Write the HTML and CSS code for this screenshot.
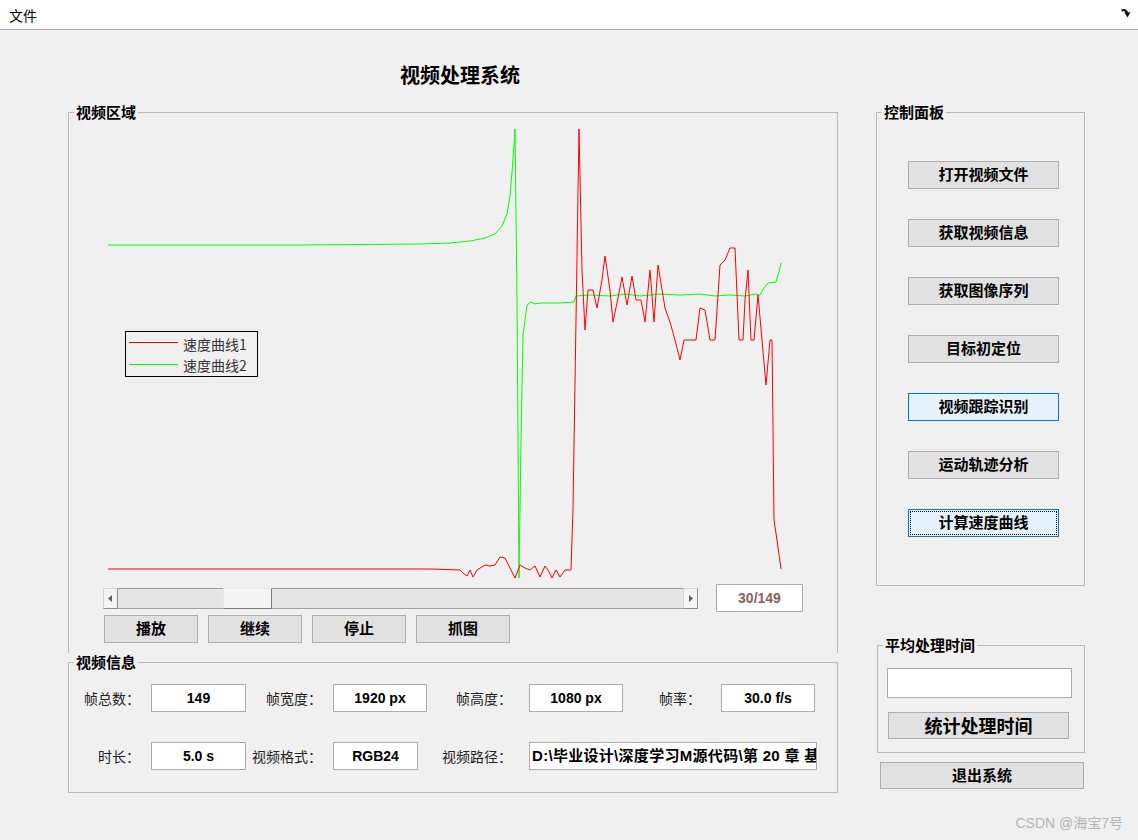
FILE: index.html
```html
<!DOCTYPE html>
<html lang="zh-CN">
<head>
  <meta charset="UTF-8">
  <title>视频处理系统</title>
  <link rel="stylesheet" href="styles.css">
</head>
<body>

  <div class="menubar">
    <span class="menu-item">文件</span>
    <svg class="dock-icon" width="10" height="10" viewBox="0 0 10 10">
      <path d="M0.5 2.5 C4 1.5 5.5 2.5 6 5" fill="none" stroke="#111" stroke-width="2.2"/>
      <path d="M3.2 4.2 L9.5 4.2 L6.5 9.5 Z" fill="#111"/>
    </svg>
  </div>

  <div class="main">
    <div class="left-col">
      <div class="title">视频处理系统</div>

      <fieldset class="panel video-panel">
        <legend>视频区域</legend>

        <svg class="plot" width="768" height="463" viewBox="69 121 768 463">
          <polyline fill="none" stroke="#00ff00" stroke-width="1"
            points="108,245 300,245 420,244 450,243 470,241 485,238 495,234 502,226 507,214 510,196 512,172 514,145 515,129 517,300 519,578 521,440 523,335 527,305 531,302 535,304 540,303 560,303 574,302 576,296 590,295 610,296 625,294 640,296 660,294 680,295 700,294 715,296 730,295 745,296 755,294 760,295 764,288 768,283 776,282 779,272 781,263"/>
          <polyline fill="none" stroke="#ff0000" stroke-width="1"
            points="108,569 430,569 460,570 463,573 467,576 470,570 473,577 477,570 485,565 490,566 495,565 500,557 505,558 510,568 515,578 520,565 525,568 530,570 535,566 540,577 545,566 548,570 552,578 556,570 560,577 565,570 571,570 573,508 576,320 579,129 582,270 585,330 588,290 593,290 597,308 602,280 605,256 610,290 613,322 618,298 622,277 627,305 632,276 636,300 641,300 645,322 650,270 654,322 658,265 665,308 670,322 675,340 680,360 684,340 690,340 696,340 700,308 705,310 710,340 715,340 720,265 725,260 730,248 735,248 739,340 743,340 745,300 748,270 751,340 754,340 758,295 762,340 766,385 770,340 772,340 774,520 777,540 781,569"/>
          <rect x="125.5" y="331.5" width="132" height="45" fill="#f0f0f0" stroke="#000"/>
          <line x1="129" y1="342.5" x2="178" y2="342.5" stroke="#ff0000"/>
          <line x1="129" y1="364.5" x2="178" y2="364.5" stroke="#00ff00"/>
          <text class="legend-text" x="183" y="350">速度曲线1</text>
          <text class="legend-text" x="183" y="371">速度曲线2</text>
        </svg>

        <div class="slider-row">
          <div class="slider">
            <div class="sl-btn">
              <svg width="5" height="7" viewBox="0 0 5 7"><path d="M4 0 L0 3.5 L4 7 Z" fill="#606060"/></svg>
            </div>
            <div class="sl-track sl-left"></div>
            <div class="sl-thumb"></div>
            <div class="sl-track sl-right"></div>
            <div class="sl-btn">
              <svg width="5" height="7" viewBox="0 0 5 7"><path d="M1 0 L5 3.5 L1 7 Z" fill="#606060"/></svg>
            </div>
          </div>
          <div class="frame-count">30/149</div>
        </div>

        <div class="play-row">
          <button class="btn small-btn">播放</button>
          <button class="btn small-btn">继续</button>
          <button class="btn small-btn">停止</button>
          <button class="btn small-btn">抓图</button>
        </div>
      </fieldset>

      <fieldset class="panel info-panel">
        <legend>视频信息</legend>
        <div class="info-grid">
          <div class="label">帧总数：</div>
          <div class="field">149</div>
          <div class="label">帧宽度：</div>
          <div class="field">1920 px</div>
          <div class="label label-wide">帧高度：</div>
          <div class="field">1080 px</div>
          <div class="label label-rate">帧率：</div>
          <div class="field">30.0 f/s</div>

          <div class="label">时长：</div>
          <div class="field">5.0 s</div>
          <div class="label">视频格式：</div>
          <div class="field field-short">RGB24</div>
          <div class="label label-wide">视频路径：</div>
          <div class="field field-path">D:\毕业设计\深度学习M源代码\第 20 章 基</div>
        </div>
      </fieldset>
    </div>

    <div class="right-col">
      <fieldset class="panel control-panel">
        <legend>控制面板</legend>
        <button class="btn ctrl-btn">打开视频文件</button>
        <button class="btn ctrl-btn">获取视频信息</button>
        <button class="btn ctrl-btn">获取图像序列</button>
        <button class="btn ctrl-btn">目标初定位</button>
        <button class="btn ctrl-btn btn-hover">视频跟踪识别</button>
        <button class="btn ctrl-btn">运动轨迹分析</button>
        <button class="btn ctrl-btn btn-focus">计算速度曲线</button>
      </fieldset>

      <fieldset class="panel time-panel">
        <legend>平均处理时间</legend>
        <div class="time-box"></div>
        <button class="btn time-btn">统计处理时间</button>
      </fieldset>

      <button class="btn exit-btn">退出系统</button>
    </div>
  </div>

  <div class="watermark">CSDN @海宝7号</div>

</body>
</html>
```

FILE: styles.css
```css
body {
  margin: 0;
  width: 1138px;
  height: 840px;
  overflow: hidden;
  position: relative;
  background-color: #f0f0f0;
  font-family: "Liberation Sans", "Noto Sans CJK SC", sans-serif;
  color: #000;
}

.menubar {
  height: 29px;
  background-color: #fff;
  border-bottom: 1px solid #a8a8a8;
  display: flex;
  align-items: center;
  justify-content: space-between;
  padding: 0 7px 0 9px;
}

.menu-item {
  font-family: "Noto Sans CJK SC", sans-serif;
  font-size: 14px;
}

.dock-icon {
  margin-top: -4px;
}

.main {
  display: flex;
  gap: 38px;
  padding-left: 68px;
}

.left-col {
  width: 770px;
}

.title {
  height: 42px;
  padding: 31px 0 0 14px;
  line-height: 28px;
  text-align: center;
  font-family: "Noto Sans CJK SC", sans-serif;
  font-size: 20px;
  font-weight: bold;
}

/* group boxes */
.panel {
  margin: 0;
  padding: 0;
  min-width: 0;
  border: 1px solid #b9b9b9;
}

.panel legend {
  margin-left: 5px;
  padding: 0 2px;
  font-family: "Noto Sans CJK SC", sans-serif;
  font-size: 15px;
  font-weight: bold;
  line-height: 18px;
}

.video-panel {
  border-bottom: none;
  padding-bottom: 10px;
}

.plot {
  display: block;
}

.legend-text {
  font-family: "Noto Sans CJK SC", sans-serif;
  font-size: 14px;
  fill: #333;
}

.slider-row {
  display: flex;
  align-items: center;
  height: 28px;
  padding-left: 34px;
}

.slider {
  display: flex;
  width: 595px;
  height: 21px;
}

.sl-btn {
  width: 15px;
  box-sizing: border-box;
  background-color: #f4f4f4;
  border: 1px solid #d4d4d4;
  border-right-color: #8c8c8c;
  border-bottom-color: #8c8c8c;
  display: flex;
  align-items: center;
  justify-content: center;
}

.sl-track {
  background-color: #e6e6e6;
  border-top: 1px solid #a0a0a0;
  border-bottom: 1px solid #a0a0a0;
}

.sl-left {
  width: 105px;
}

.sl-right {
  flex: 1;
}

.sl-thumb {
  width: 49px;
  box-sizing: border-box;
  background-color: #f5f5f5;
  border: 1px solid #e8e8e8;
  border-right-color: #7c7c7c;
  border-bottom-color: #7c7c7c;
}

.frame-count {
  margin-left: 18px;
  width: 87px;
  height: 28px;
  box-sizing: border-box;
  background-color: #fff;
  border: 1px solid #acacac;
  text-align: center;
  line-height: 26px;
  font-size: 14px;
  font-weight: bold;
  color: #8e5f55;
}

.play-row {
  display: flex;
  gap: 10px;
  padding-left: 35px;
  margin-top: 3px;
}

/* buttons */
.btn {
  display: block;
  box-sizing: border-box;
  height: 28px;
  padding: 0 0 2px 0;
  background-color: #e1e1e1;
  border: 1px solid #adadad;
  font-family: "Noto Sans CJK SC", sans-serif;
  font-size: 15px;
  font-weight: bold;
  line-height: 22px;
  color: #000;
}

.small-btn {
  width: 94px;
}

.control-panel {
  padding: 40px 0 48px 0;
}

.ctrl-btn {
  width: 151px;
  margin: 30px 0 0 31px;
}

.ctrl-btn:first-of-type {
  margin-top: 0;
}

.btn-hover {
  background-color: #e5f1fb;
  border-color: #0078d7;
}

.btn-focus {
  background-color: #e5f1fb;
  border-color: #0078d7;
  outline: 1px dotted #000;
  outline-offset: -3px;
}

.right-col {
  width: 209px;
  padding-top: 73px;
}

.time-panel {
  margin: 50px 0 0 1px;
  padding: 14px 0 13px 0;
}

.time-box {
  width: 185px;
  height: 30px;
  margin-left: 9px;
  box-sizing: border-box;
  background-color: #fff;
  border: 1px solid #acacac;
}

.time-btn {
  width: 181px;
  height: 27px;
  margin: 14px 0 0 10px;
  font-size: 18px;
  line-height: 22px;
}

.exit-btn {
  width: 204px;
  height: 27px;
  margin: 9px 0 0 4px;
}

/* info grid */
.info-panel {
  padding: 13px 0 22px 0;
}

.info-grid {
  display: grid;
  grid-template-columns: 82px 95px 87px 94px 102px 94px 98px 94px;
  grid-auto-rows: 28px;
  row-gap: 30px;
}

.label {
  font-family: "Noto Sans CJK SC", sans-serif;
  font-size: 14px;
  line-height: 28px;
  text-align: right;
  padding-right: 11px;
  color: #222;
}

.label-wide {
  padding-right: 17px;
}

.label-rate {
  padding-right: 20px;
}

.field {
  box-sizing: border-box;
  background-color: #fff;
  border: 1px solid #acacac;
  text-align: center;
  line-height: 26px;
  font-size: 14px;
  font-weight: bold;
  white-space: nowrap;
  overflow: hidden;
}

.field-short {
  width: 85px;
}

.field-path {
  grid-column: span 3;
  width: 288px;
  text-align: left;
  padding-left: 2px;
  font-size: 15px;
  letter-spacing: 0.3px;
}

.watermark {
  position: absolute;
  right: 15px;
  bottom: 8px;
  font-family: "Liberation Sans", "Noto Sans CJK SC", sans-serif;
  font-size: 14px;
  color: #b4b4b4;
}
```
